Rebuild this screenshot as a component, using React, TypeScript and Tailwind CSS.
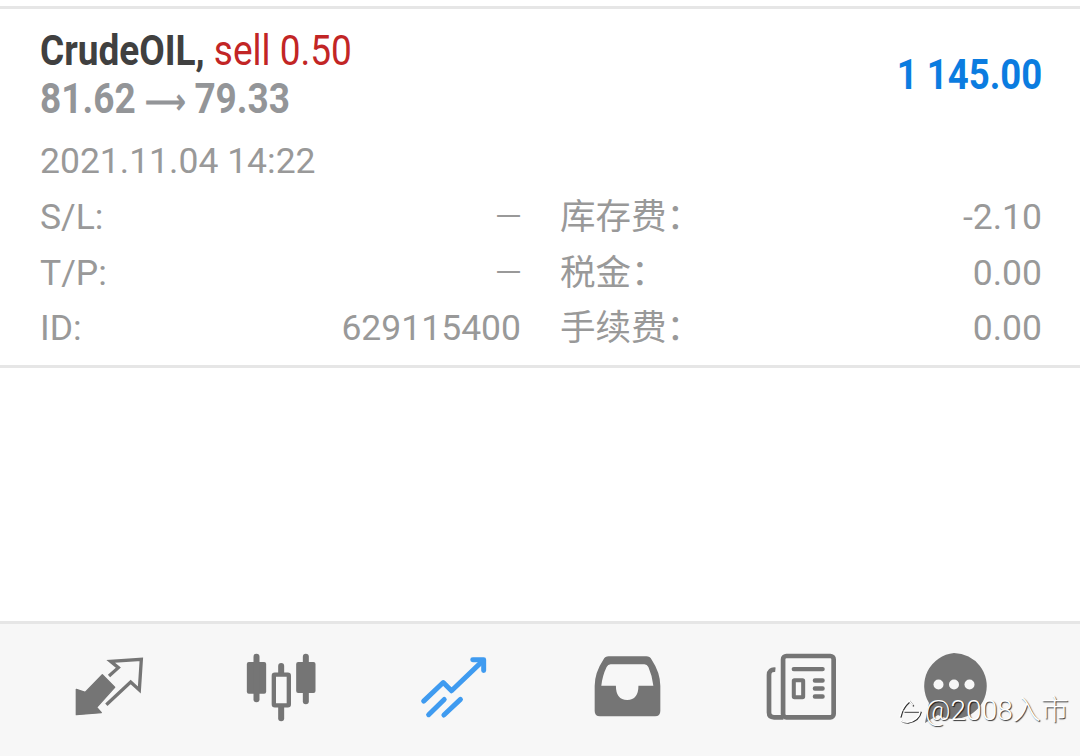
const rows = [
  { label: "S/L:", value: "一", feeLabel: "库存费：", fee: "-2.10" },
  { label: "T/P:", value: "一", feeLabel: "税金：", fee: "0.00" },
  { label: "ID:", value: "629115400", feeLabel: "手续费：", fee: "0.00" },
];

function DealIcon() {
  return (
    <svg viewBox="100 85 210 180" className="w-[70px] h-[60px] mt-[33px]" fill="none">
      <path d="M107 182 L107 258 L182 252 L168 236 L222 176 L185 138 L134 191 Z" fill="#757575" stroke="#757575" strokeWidth="4" strokeLinejoin="round" />
      <path d="M205 142 L233 117 L210 98 L302 92 L296 184 L270 160 L197 228" stroke="#757575" strokeWidth="10" />
    </svg>
  );
}

function CandlesIcon() {
  return (
    <svg viewBox="615 70 215 207" className="w-[72px] h-[69px] mt-[29px]" fill="#757575">
      <rect x="620" y="97" width="58" height="95" rx="6" />
      <rect x="640" y="72" width="18" height="146" rx="9" />
      <rect x="768" y="97" width="58" height="93" rx="6" />
      <rect x="788" y="72" width="18" height="152" rx="9" />
      <rect x="714" y="100" width="18" height="175" rx="9" />
      <rect x="701" y="135" width="45" height="92" rx="3" fill="#f7f7f7" stroke="#757575" strokeWidth="13" />
    </svg>
  );
}

function TradeIcon() {
  return (
    <svg viewBox="60 78 205 190" className="w-[68px] h-[63px] mt-[32px]" fill="none" stroke="#3f9bf0" strokeLinecap="round" strokeLinejoin="round">
      <path d="M71 214 L130 158 L155 183 L250 92" strokeWidth="15" />
      <path d="M219 89 L252 89 L252 122" strokeWidth="15" />
      <path d="M86 255 L133 209" strokeWidth="15" />
      <path d="M132 256 L182 209" strokeWidth="15" />
    </svg>
  );
}

function InboxIcon() {
  return (
    <svg viewBox="583 80 200 184" className="w-[67px] h-[61px] mt-[32px]">
      <path d="M626 81 L740 81 Q750 81 756 91 Q782 130 782 170 L782 246 Q782 262 766 262 L600 262 Q584 262 584 246 L584 170 Q584 130 610 91 Q616 81 626 81 Z" fill="#757575" />
      <path d="M632 105 L734 105 Q742 105 746 113 Q758 140 761 170 L716 170 Q716 213 682 213 Q648 213 648 170 L604 170 Q607 140 620 113 Q624 105 632 105 Z" fill="#f7f7f7" />
    </svg>
  );
}

function NewsIcon() {
  return (
    <svg viewBox="78 70 212 200" className="w-[71px] h-[67px] mt-[29px]" fill="none" stroke="#757575">
      <rect x="129" y="79" width="151" height="183" rx="10" strokeWidth="14" />
      <path d="M106 120 Q87 118 87 136 L87 248 Q87 262 102 262 L130 262" strokeWidth="14" />
      <path d="M161 118 L247 118 M224 152 L247 152 M224 176 L247 176 M224 200 L247 200" strokeWidth="13" strokeLinecap="round" />
      <rect x="161" y="151" width="28" height="51" rx="2" strokeWidth="12" />
    </svg>
  );
}

function MoreIcon() {
  return (
    <svg viewBox="0 0 66 72" className="w-[66px] h-[72px] mt-[29px]">
      <path d="M33 0 A33 33 0 1 1 17 62 L4 70 L8 50 A33 33 0 0 1 33 0 Z" fill="#757575" />
      <circle cx="17.5" cy="31.5" r="5" fill="#f7f7f7" />
      <circle cx="33" cy="31.5" r="5" fill="#f7f7f7" />
      <circle cx="48.5" cy="31.5" r="5" fill="#f7f7f7" />
    </svg>
  );
}

export default function App() {
  return (
    <div className="relative flex flex-col w-[1080px] h-[756px] overflow-hidden bg-white font-['Roboto',_'Noto_Sans_CJK_SC',_sans-serif]">
      {/* Deal card */}
      <div className="mt-[6px] border-y-[3px] border-[#e6e6e6] pl-[40px] pr-[38px] h-[362px]">
        <div className="flex justify-between pt-[17px]">
          <div className="origin-left scale-x-[0.86] whitespace-nowrap">
            <div className="text-[43px] leading-[48px] font-bold text-[#404040]">
              CrudeOIL, <span className="font-normal text-[#c22525]">sell 0.50</span>
            </div>
            <div className="text-[43px] leading-[48px] font-bold text-[#939598]">
              81.62 <span className="text-[33px] leading-[20px]">⟶</span> 79.33
            </div>
          </div>
          <div className="origin-right scale-x-[0.85] text-[43px] leading-[48px] font-bold text-[#0b7ce0] whitespace-nowrap mt-[24px]">
            1 145.00
          </div>
        </div>
        <div className="mt-[19px] text-[35.5px] leading-[40px] text-[#999999]">2021.11.04 14:22</div>
        <div className="mt-[9px] flex flex-col text-[35.5px] leading-[55.5px] text-[#999999]">
          {rows.map((r) => (
            <div key={r.label} className="flex">
              <div className="flex justify-between w-[481px]">
                <span>{r.label}</span>
                <span className={r.value === "一" ? "text-[25px]" : ""}>{r.value}</span>
              </div>
              <div className="flex justify-between ml-[39px] flex-1">
                <span>{r.feeLabel}</span>
                <span>{r.fee}</span>
              </div>
            </div>
          ))}
        </div>
      </div>

      <div className="flex-1" />

      {/* Bottom nav */}
      <div className="flex h-[135px] border-t-[3px] border-[#e6e6e6] bg-[#f7f7f7] pl-[74px]">
        <DealIcon />
        <div className="ml-[101px]"><CandlesIcon /></div>
        <div className="ml-[103px]"><TradeIcon /></div>
        <div className="ml-[106px]"><InboxIcon /></div>
        <div className="ml-[105px]"><NewsIcon /></div>
        <div className="ml-[84px]"><MoreIcon /></div>
      </div>

      {/* Watermark */}
      <div className="absolute left-[898px] top-[693px] flex items-center gap-[1px] text-[28px] leading-[36px] font-light text-white [text-shadow:1px_1px_1px_rgba(0,0,0,0.8)] whitespace-nowrap">
        <svg viewBox="0 0 28 28" className="w-[26px] h-[28px]" fill="none" strokeWidth="1.6">
          <path d="M3 21 Q5 11 13 4 L17 9 M7 15 L25 15 M25 15 Q23 25 11 27 Q7 27 4 25" stroke="#333333" />
          <path d="M2 20 Q4 10 12 3 L16 8 M6 14 L24 14 M24 14 Q22 24 10 26 Q6 26 3 24" stroke="white" />
        </svg>
        <span>@2008入市</span>
      </div>
    </div>
  );
}
